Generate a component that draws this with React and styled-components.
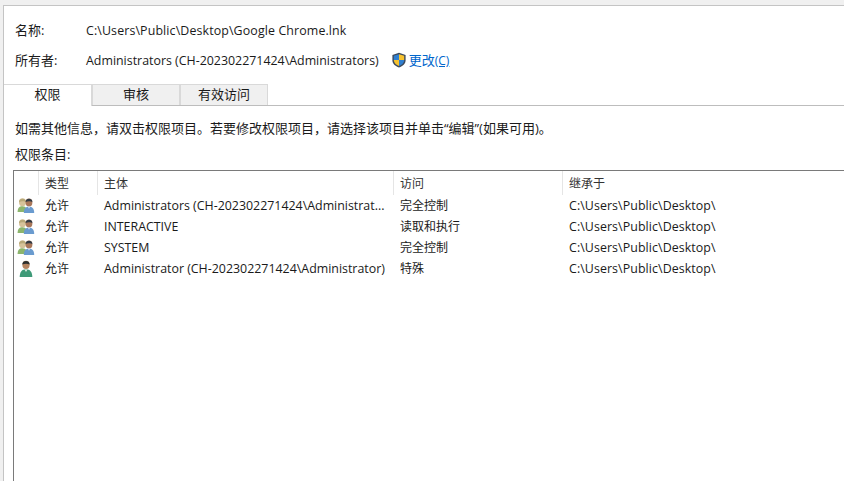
import React from 'react';
import styled, { createGlobalStyle } from 'styled-components';

const Global = createGlobalStyle`
  html, body { margin: 0; padding: 0; background: #f0f0f0; }
  body { font-family: "Open Sans", "Noto Sans CJK SC", sans-serif; font-size: 13px; color: #1a1a1a; }
`;
const Frame = styled.div`
  width: 844px; height: 481px; overflow: hidden; box-sizing: border-box;
  padding: 5px 0 0 3px; background: #f0f0f0;
`;
const Panel = styled.div`
  height: 476px; box-sizing: border-box; background: #fff;
  border-top: 1px solid #c4c4c4; border-left: 1px solid #c4c4c4;
  padding-top: 14px; display: flex; flex-direction: column;
`;
const InfoRow = styled.div`
  display: flex; align-items: center; height: 20px; margin-bottom: ${p => p.$mb || 0}px; padding-left: 11px;
`;
const InfoLabel = styled.div` width: 71px; flex: none; padding-bottom: 2px; `;
const Latin = styled.div` font-size: 12.4px; white-space: nowrap; letter-spacing: ${p => p.$track || 0}px; `;
const ChangeLink = styled.a`
  display: inline-flex; align-items: center; margin-left: 12px; color: #0066cc;
  text-decoration: none;
`;
const LinkText = styled.span` padding-bottom: 2px; `;
const Accel = styled.span` text-decoration: underline; font-size: 12px; `;
const ShieldIcon = styled.svg` width: 16px; height: 16px; margin-right: 2px; flex: none; `;
const TabBar = styled.div`
  display: flex; height: 22px; box-sizing: border-box; border-bottom: 1px solid #bdbdbd; align-items: flex-end;
`;
const Tab = styled.div`
  box-sizing: border-box; width: ${p => p.$w}px; height: ${p => p.$active ? 22 : 21}px;
  margin-bottom: ${p => p.$active ? -1 : 0}px;
  padding-bottom: ${p => p.$active ? 4 : 3}px;
  display: flex; align-items: center; justify-content: center;
  background: ${p => p.$active ? '#fff' : '#f0f0f0'};
  border-top: 1px solid #d9d9d9;
  border-left: ${p => p.$first ? '0' : '1px solid #d9d9d9'};
  border-right: 1px solid #d9d9d9;
`;
const Note = styled.div` padding: 12px 0 0 11px; height: 20px; line-height: 20px; `;
const SectionLabel = styled.div` padding: 6px 0 0 11px; height: 20px; line-height: 20px; `;
const ListBox = styled.div`
  margin: 6px 0 0 9px; flex: 1; width: 900px; box-sizing: border-box;
  border-top: 1px solid #7a7a7a; border-left: 1px solid #7a7a7a;
  font-size: 12px;
`;
const Columns = `display: grid; grid-template-columns: 24px 59px 296px 169px 1fr;`;
const HeadRow = styled.div`${Columns} height: 24px; align-items: center;`;
const HeadCell = styled.div`
  height: 24px; line-height: 25px; padding-left: 6px; box-sizing: border-box;
  border-left: ${p => p.$plain ? 'none' : '1px solid #e5e5e5'};
  color: #333;
`;
const Row = styled.div`${Columns} height: 21px; align-items: center; line-height: 21px;`;
const Cell = styled.div`
  padding-left: 7px; white-space: nowrap; overflow: hidden;
  font-size: ${p => p.$latin ? '12.4px' : '12px'};
  line-height: ${p => p.$latin ? 21 : 22}px;
  letter-spacing: ${p => p.$track || 0}px;
`;
const IconCell = styled.div` display: flex; align-items: center; padding-left: 3px; `;
const Glyph = styled.svg` width: 18px; height: 18px; display: block; `;

const Shield = () => (
  <ShieldIcon viewBox="0 0 16 16">
    <path d="M8 .8 14.600 3v5.200c0 3.600-2.800 5.900-6.600 7.200C4.200 14.100 1.400 11.800 1.400 8.200V3z" fill="#3d4a5c" />
    <path d="M8 2.300v5.700H2.800V3.800z" fill="#2f7fd0" />
    <path d="M8 2.300l5.200 1.500V8H8z" fill="#f7c22e" />
    <path d="M2.800 8H8v5.900C5 12.800 2.900 11 2.800 8z" fill="#f7c22e" />
    <path d="M8 8h5.200c-.1 3-2.200 4.800-5.200 5.900z" fill="#2f7fd0" />
  </ShieldIcon>
);

const GroupIcon = () => (
  <Glyph viewBox="0 0 18 18">
    <ellipse cx="5.500" cy="5.200" rx="3.500" ry="4" fill="#d6c39a" />
    <path d="M2 5.200C1.700.6 9.300.6 9 5.200c-1.500-1.400-5-1.400-7 0z" fill="#b8a878" />
    <path d="M.6 15c0-4 1.500-5.800 4.900-5.800 2 0 3.200.7 3.800 2.200V15z" fill="#8cb56d" />
    <ellipse cx="12" cy="5.500" rx="3.400" ry="4" fill="#a9775a" />
    <path d="M8.600 5C8.600.8 15.400.8 15.400 5c-1.500-1-5-1-6.800 0z" fill="#2f3a45" />
    <path d="M6.800 16c0-4.400 1.800-6.300 5.200-6.300s5.200 1.900 5.200 6.300z" fill="#6a9bcf" />
    <path d="M11 9.700h2l-1 2z" fill="#e8eef5" />
  </Glyph>
);

const UserIcon = () => (
  <Glyph viewBox="0 0 18 18">
    <ellipse cx="9" cy="4.900" rx="3.600" ry="4.100" fill="#b5835f" />
    <path d="M5.300 4.400C5.300-.1 12.700-.1 12.700 4.400c-2-.9-5.200-.9-7.400 0z" fill="#2b2f2e" />
    <path d="M2.700 17c0-5 2.300-7.700 6.300-7.700s6.300 2.700 6.300 7.700z" fill="#3f9a78" />
    <path d="M7.600 9.400h2.800L9 12z" fill="#e6f0ea" />
  </Glyph>
);

const rows = [
  ['g', 'Administrators (CH-202302271424\\Administrat...', '完全控制'],
  ['g', 'INTERACTIVE', '读取和执行'],
  ['g', 'SYSTEM', '完全控制'],
  ['u', 'Administrator (CH-202302271424\\Administrator)', '特殊'],
];

export default function App() {
  return (
    <Frame>
      <Global />
      <Panel>
        <InfoRow $mb={10}>
          <InfoLabel>名称:</InfoLabel>
          <Latin $track={0.12}>C:\Users\Public\Desktop\Google Chrome.lnk</Latin>
        </InfoRow>
        <InfoRow $mb={14}>
          <InfoLabel>所有者:</InfoLabel>
          <Latin>Administrators (CH-202302271424\Administrators)</Latin>
          <ChangeLink href="#"><Shield /><LinkText>更改<Accel>(C)</Accel></LinkText></ChangeLink>
        </InfoRow>
        <TabBar>
          <Tab $w={88} $active $first>权限</Tab>
          <Tab $w={88}>审核</Tab>
          <Tab $w={88}>有效访问</Tab>
        </TabBar>
        <Note>如需其他信息，请双击权限项目。若要修改权限项目，请选择该项目并单击“编辑”(如果可用)。</Note>
        <SectionLabel>权限条目:</SectionLabel>
        <ListBox>
          <HeadRow>
            <HeadCell $plain />
            <HeadCell>类型</HeadCell>
            <HeadCell>主体</HeadCell>
            <HeadCell>访问</HeadCell>
            <HeadCell>继承于</HeadCell>
          </HeadRow>
          {rows.map((r, i) => (
            <Row key={i}>
              <IconCell>{r[0] === 'g' ? <GroupIcon /> : <UserIcon />}</IconCell>
              <Cell>允许</Cell>
              <Cell $latin>{r[1]}</Cell>
              <Cell>{r[2]}</Cell>
              <Cell $latin $track={0.08}>C:\Users\Public\Desktop\</Cell>
            </Row>
          ))}
        </ListBox>
      </Panel>
    </Frame>
  );
}
